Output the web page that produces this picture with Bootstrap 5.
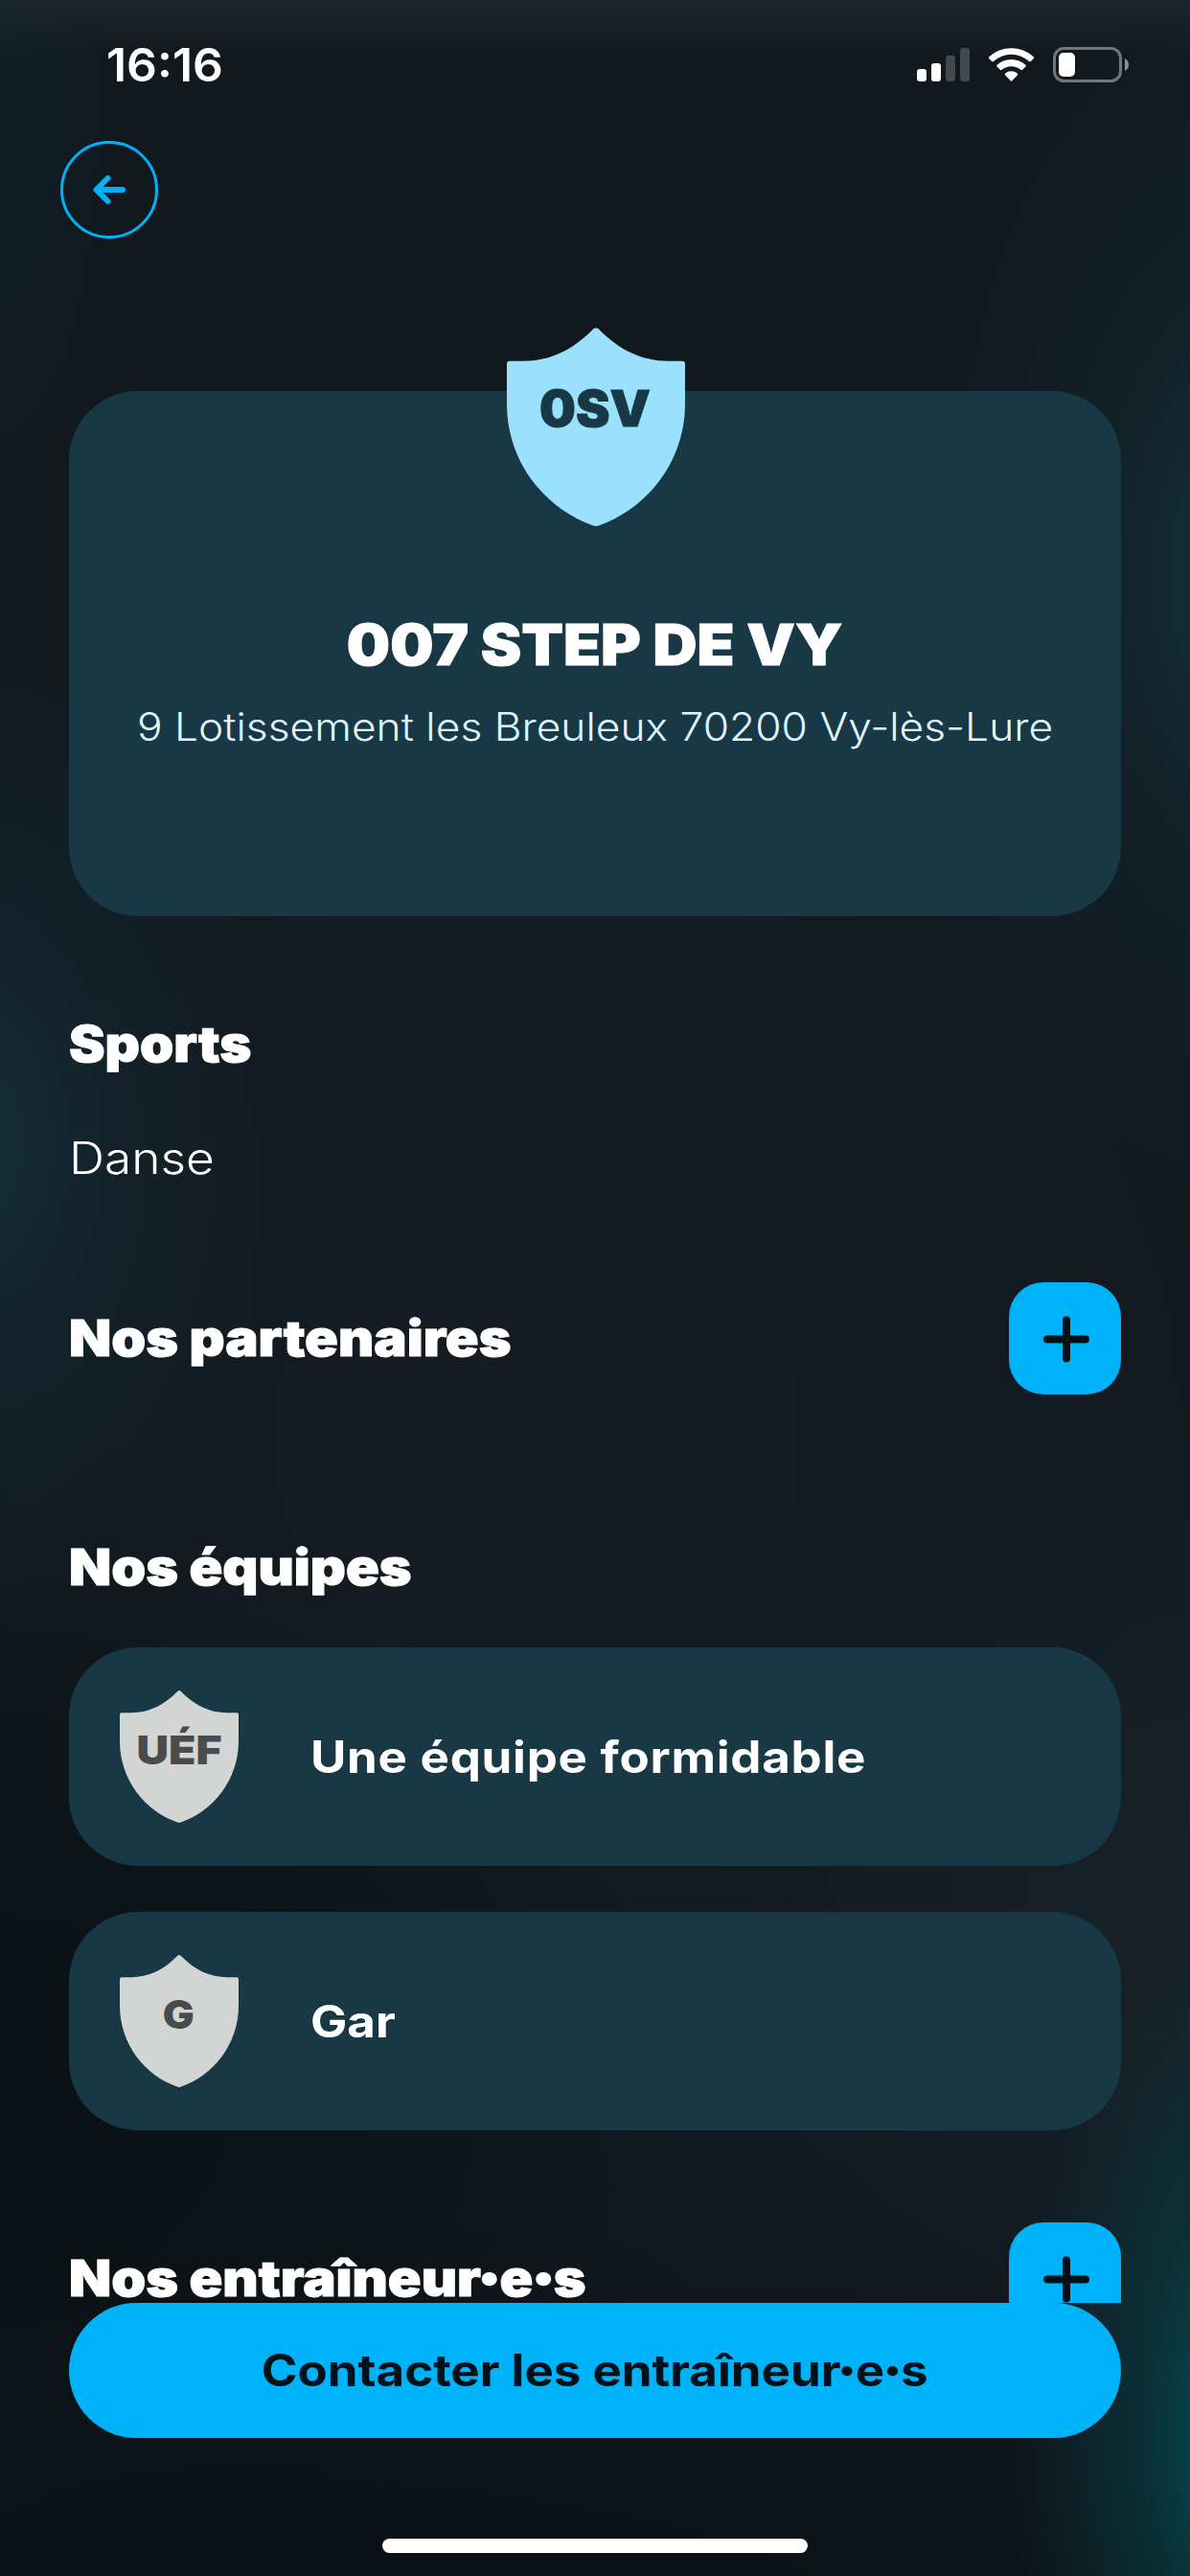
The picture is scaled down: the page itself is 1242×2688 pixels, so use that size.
<!DOCTYPE html>
<html lang="fr">
<head>
<meta charset="utf-8">
<meta name="viewport" content="width=device-width, initial-scale=1">
<title>007 STEP DE VY</title>
<link rel="stylesheet" href="https://cdn.jsdelivr.net/npm/bootstrap@5.3.0/dist/css/bootstrap.min.css">
<style>
:root{--accent:#00b2f8;--panel:#193845;--ink:#001219}
html,body{height:100%}
body{margin:0;color:#fff;font-family:Inter,"Liberation Sans",sans-serif;overflow:hidden;background:#111a20}
.app-screen{width:1242px;height:2688px;
  background:
    linear-gradient(180deg,rgba(34,44,51,.65) 0,rgba(34,44,51,0) 60px),
    radial-gradient(ellipse 240px 520px at 1300px 2540px,rgba(4,90,100,.9),rgba(6,70,78,.5) 45%,rgba(6,60,68,0) 100%),
    radial-gradient(ellipse 330px 520px at -40px 1190px,rgba(20,56,68,.72),rgba(18,46,56,.36) 50%,rgba(18,46,56,0) 100%),
    radial-gradient(ellipse 330px 640px at 1300px 600px,rgba(20,58,66,.8),rgba(18,46,54,.35) 50%,rgba(18,46,54,0) 100%),
    radial-gradient(ellipse 120px 400px at 0 120px,rgba(14,36,44,.6),rgba(14,36,44,0)),
    radial-gradient(ellipse 760px 640px at 0 2200px,rgba(10,18,21,1) 20%,rgba(10,18,21,0) 100%),
    radial-gradient(ellipse 1300px 480px at 420px 2800px,rgba(10,18,21,1) 30%,rgba(10,18,21,0) 100%),
    radial-gradient(ellipse 900px 1000px at 560px 1500px,#151c24,rgba(21,28,36,0)),
    radial-gradient(ellipse 500px 500px at 1242px 1960px,#18242a,rgba(24,36,42,0)),
    #11191f}
.status-bar{height:135px;padding:0 62px 0 111px}
.clock{font-size:48px;font-weight:600;line-height:135px;transform:scaleX(1.04);transform-origin:left}
.status-icons{width:224px;height:135px}
.scroll-area{height:2268px;overflow:hidden;padding:0 72px}
.back-btn{width:102px;height:102px;margin:12px 0 0 -9px;border:3px solid var(--accent);border-radius:50%!important}
.wide{display:inline-block;white-space:nowrap;transform:scaleX(var(--sx,1.1));transform-origin:left}
.club-card{height:548px;margin-top:159px;background:var(--panel);border:0;border-radius:72px;padding:0}
.club-crest{width:186px;height:210px;margin:-66px 0 0 2px}
.club-name{--sx:1.089;font-size:58.5px;font-weight:900;line-height:76px;margin:83px 0 0;transform-origin:center;-webkit-text-stroke:1px #fff}
.club-addr{--sx:1.094;font-size:40.5px;font-weight:300;line-height:60px;margin:18px 0 0;color:#dff6ff;transform-origin:center}
.section-title{font-size:52px;font-weight:900;line-height:64px;margin:0;--sx:1.106;-webkit-text-stroke:1px #fff}
.sports .section-title{--sx:1.085}
.sport-name{--sx:1.118;font-size:46px;font-weight:300;line-height:60px}
.add-btn{width:117px;height:117px;border-radius:36px!important;background:var(--accent);color:var(--ink)}
.team-row{height:228px;border-radius:72px;background:var(--panel);border:0;color:#fff;padding:0 53px}
.team-crest{width:124px;height:140px;flex:none;margin-top:1px}
.team-name{--sx:1.11;font-size:46px;font-weight:700;line-height:60px;margin-left:75px}
.team-long{letter-spacing:.65px}
.crest-text{font-weight:900;text-anchor:middle;font-family:Inter,"Liberation Sans",sans-serif}
.contact-btn{height:141px;margin:0 72px;border-radius:72px!important;background:var(--accent);color:var(--ink);font-size:46px;font-weight:700}
.contact-btn .wide{--sx:1.109;transform-origin:center}
.pt{-webkit-text-stroke:4px currentColor}
.contact-btn .pt{-webkit-text-stroke-width:2.5px}
.home-bar{width:444px;height:15px;border-radius:8px;background:#fff;margin-top:105px}
/* vertical rhythm of the sections */
.sports{margin-top:102px;gap:56px}
.partners{margin-top:100px}
.teams{margin-top:149px;gap:48px}
.teams .section-title{margin-bottom:3px}
.coaches{margin-top:96px}
.back-btn,.sports,.partners,.teams,.coaches,.status-bar,.scroll-area,.team-row{flex-shrink:0}
</style>
</head>
<body>
<svg width="0" height="0" class="d-block">
  <defs>
    <path id="crest" d="M91.500 1 Q94 -1 96.500 1 C119 24 143 35 170 35 L185 35 Q188 35 188 38 L188 80 C188 142 147 191 97 208.500 Q94 209.500 91 208.500 C41 191 0 142 0 80 L0 38 Q0 35 3 35 L18 35 C45 35 69 24 91.500 1Z"/>
  </defs>
</svg>
<div class="app-screen d-flex flex-column">
  <header class="status-bar d-flex justify-content-between align-items-center">
    <div class="clock">16:16</div>
    <svg class="status-icons" viewBox="956 0 224 135">
      <g fill="#fff"><rect x="957" y="72" width="10" height="13" rx="3"/><rect x="972" y="66" width="10" height="19" rx="3"/></g>
      <g fill="#43494d"><rect x="987" y="58" width="10" height="27" rx="3"/><rect x="1002" y="50" width="10" height="35" rx="3"/></g>
      <g fill="#fff">
        <path d="M1032.200 59.300 A34.500 34.500 0 0 1 1078.800 59.300 Q1079.700 60.200 1078.800 61.100 L1075.900 64 Q1075 64.900 1074 64 A27.500 27.500 0 0 0 1037 64 Q1036 64.900 1035.100 64 L1032.200 61.100 Q1031.300 60.200 1032.200 59.300Z"/>
        <path d="M1040.600 67.800 A22 22 0 0 1 1070.400 67.800 Q1071.300 68.700 1070.400 69.600 L1067.200 72.800 Q1066.300 73.700 1065.300 72.800 A15 15 0 0 0 1045.700 72.800 Q1044.700 73.700 1043.800 72.800 L1040.600 69.600 Q1039.700 68.700 1040.600 67.800Z"/>
        <path d="M1049.200 76.600 A10 10 0 0 1 1061.800 76.600 Q1062.800 77.600 1061.800 78.600 L1056.500 84.100 Q1055.500 85.100 1054.500 84.100 L1049.200 78.600 Q1048.200 77.600 1049.200 76.600Z"/>
      </g>
      <rect x="1100.500" y="50.500" width="69" height="34" rx="10" fill="none" stroke="#70787b" stroke-width="3"/>
      <rect x="1105" y="55" width="17" height="25" rx="5" fill="#fff"/>
      <path d="M1174 61 Q1178 63 1178 67.500 Q1178 72 1174 74Z" fill="#8a9092"/>
    </svg>
  </header>

  <main class="scroll-area d-flex flex-column">
    <button class="btn back-btn d-flex align-items-center justify-content-center p-0" type="button" aria-label="Retour">
      <svg width="40" height="36" viewBox="0 0 40 36" fill="none" stroke="#00b2f8" stroke-width="6" stroke-linecap="round" stroke-linejoin="round"><path d="M34 18H7M18.500 6L6.500 18L18.500 30"/></svg>
    </button>

    <section class="card club-card align-items-center flex-shrink-0">
      <svg class="club-crest" viewBox="0 0 188 212"><use href="#crest" fill="#99e1fc"/><text class="crest-text" x="93" y="103.500" font-size="53" textLength="117" lengthAdjust="spacingAndGlyphs" fill="#193845" stroke="#193845">0SV</text></svg>
      <h1 class="club-name wide">007 STEP DE VY</h1>
      <p class="club-addr wide">9 Lotissement les Breuleux 70200 Vy-lès-Lure</p>
    </section>

    <section class="d-flex flex-column align-items-start sports">
      <h2 class="section-title wide">Sports</h2>
      <div class="sport-name wide">Danse</div>
    </section>

    <section class="d-flex justify-content-between align-items-center partners">
      <h2 class="section-title wide">Nos partenaires</h2>
      <button class="btn add-btn d-flex align-items-center justify-content-center p-0" type="button" aria-label="Ajouter"><svg width="50" height="50" viewBox="0 0 50 50" stroke="#001219" stroke-width="8" stroke-linecap="round"><path d="M6 25.500H46M26 5.500V45.500"/></svg></button>
    </section>

    <section class="d-flex flex-column align-items-stretch teams">
      <h2 class="section-title wide">Nos équipes</h2>
      <div class="card team-row d-flex flex-row align-items-center">
        <svg class="team-crest" viewBox="0 0 188 212"><use href="#crest" fill="#d3d5d4"/><text class="crest-text" x="94" y="117" font-size="62" textLength="135" lengthAdjust="spacingAndGlyphs" fill="#494c4c">UÉF</text></svg>
        <div class="team-name wide team-long">Une équipe formidable</div>
      </div>
      <div class="card team-row d-flex flex-row align-items-center">
        <svg class="team-crest" viewBox="0 0 188 212"><use href="#crest" fill="#d3d5d4"/><text class="crest-text" x="93" y="117" font-size="62" textLength="50" lengthAdjust="spacingAndGlyphs" fill="#494c4c">G</text></svg>
        <div class="team-name wide">Gar</div>
      </div>
    </section>

    <section class="d-flex justify-content-between align-items-center coaches">
      <h2 class="section-title wide">Nos entraîneur<span class="pt">·</span>e<span class="pt">·</span>s</h2>
      <button class="btn add-btn d-flex align-items-center justify-content-center p-0" type="button" aria-label="Ajouter"><svg width="50" height="50" viewBox="0 0 50 50" stroke="#001219" stroke-width="8" stroke-linecap="round"><path d="M6 25.500H46M26 5.500V45.500"/></svg></button>
    </section>
  </main>

  <footer class="d-flex flex-column">
    <button class="btn contact-btn d-flex align-items-center justify-content-center p-0" type="button"><span class="wide">Contacter les entraîneur<span class="pt">·</span>e<span class="pt">·</span>s</span></button>
    <div class="home-bar align-self-center"></div>
  </footer>
</div>
<script src="https://cdn.jsdelivr.net/npm/bootstrap@5.3.0/dist/js/bootstrap.bundle.min.js"></script>
</body>
</html>
